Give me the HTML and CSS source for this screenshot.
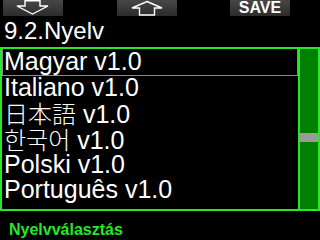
FILE: index.html
```html
<!DOCTYPE html>
<html>
<head>
<meta charset="utf-8">
<link rel="stylesheet" href="styles.css">
</head>
<body>
<div class="screen">
  <div class="topbar">
    <div class="btn">
      <svg width="60" height="16" viewBox="0 0 60 16"><polygon points="22,0.8 37,0.8 37,6 45,6 29.5,14 14,6 22,6" fill="none" stroke="#fff" stroke-width="1.4"/></svg>
    </div>
    <div class="btn">
      <svg width="60" height="16" viewBox="0 0 60 16"><polygon points="30,1.5 45,8 37.5,8 37.5,15 22.5,15 22.5,8 15,8" fill="none" stroke="#fff" stroke-width="1.4"/></svg>
    </div>
    <div class="btn save">SAVE</div>
  </div>
  <div class="title">9.2.Nyelv</div>
  <div class="listbox">
    <div class="list">
      <div class="row selected">Magyar v1.0</div>
      <div class="row">Italiano v1.0</div>
      <div class="row"><span class="jp">日本語</span> v1.0</div>
      <div class="row"><span class="kr">한국어</span> v1.0</div>
      <div class="row">Polski v1.0</div>
      <div class="row">Português v1.0</div>
    </div>
    <div class="scrollbar"><div class="thumb"></div></div>
  </div>
  <div class="footer">Nyelvválasztás</div>
</div>
</body>
</html>
```
FILE: styles.css
```css
html, body {
  margin: 0;
  padding: 0;
  background: #000;
}
.screen {
  width: 320px;
  height: 240px;
  overflow: hidden;
  background: #000;
  color: #fff;
  font-family: "Liberation Sans", Arial, sans-serif;
}
.topbar {
  display: flex;
  justify-content: space-between;
  height: 17px;
  padding: 0 30px 0 3px;
}
.btn {
  width: 60px;
  height: 16px;
  background: linear-gradient(#474747, #2c2c2c);
  display: flex;
  align-items: center;
  justify-content: center;
}
.btn svg {
  display: block;
}
.save {
  font-weight: bold;
  font-size: 16px;
  line-height: 16px;
  color: #fff;
}
.title {
  height: 30px;
  font-size: 24px;
  line-height: 28px;
  padding-left: 4px;
}
.listbox {
  display: flex;
  height: 160px;
  border: 2px solid #28e628;
}
.list {
  flex: 1;
  overflow: hidden;
  padding: 0 1px;
}
.row {
  height: 25.7px;
  font-size: 25px;
  line-height: 25.7px;
  padding-left: 1px;
  white-space: nowrap;
}
.row.selected {
  outline: 1px solid #8a8a8a;
  outline-offset: 0;
}
.jp {
  font-family: "Noto Sans CJK JP", sans-serif;
  font-weight: 300;
  font-size: 24px;
}
.kr {
  font-family: "Noto Sans CJK KR", sans-serif;
  font-weight: 300;
  font-size: 24px;
}
.scrollbar {
  width: 18px;
  border-left: 2px solid #28e628;
  background: #008000;
}
.thumb {
  margin-top: 84px;
  height: 9px;
  background: #9a9a9a;
}
.footer {
  padding: 10px 0 0 9px;
  font-size: 16px;
  line-height: 18px;
  font-weight: bold;
  color: #28e628;
}
```
